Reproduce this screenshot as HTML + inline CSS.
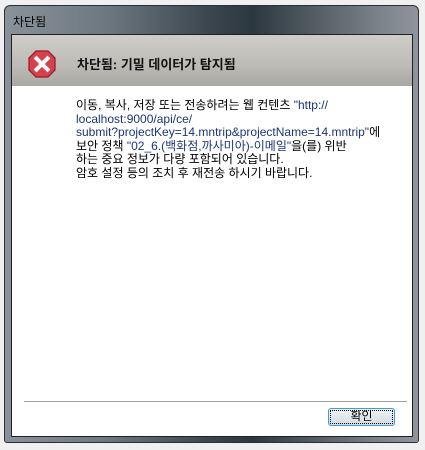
<!DOCTYPE html><html><head><meta charset="utf-8"><style>
body{margin:0;width:425px;height:450px;background:#f0f0f0;position:relative;overflow:hidden;font-family:"Liberation Sans","Noto Sans CJK KR","NanumGothic",sans-serif}
.win{position:absolute;left:4px;top:5px;width:415px;height:438px;border-radius:6px 6px 3px 3px;background:linear-gradient(90deg,#8a9299 0%,#6c7780 25%,#3a454e 50%,#2c3840 60%,#7a8188 90%,#8f959a 100%);border:1px solid #2a2f33;box-sizing:border-box}
.title{position:absolute;left:8px;top:7px;font-size:12px;color:#000}
.inner{position:absolute;left:6px;top:28px;width:402px;height:403px;background:#fff;border:1px solid #1e2226;box-sizing:border-box}
.hdr{position:absolute;left:0;top:0;width:400px;height:51px;background:linear-gradient(180deg,#cfcdc7 0%,#bdbbb5 60%,#a9a8a4 100%)}
.h{position:absolute;left:65px;top:19px;font-size:13px;font-weight:bold;color:#111}
.txt{position:absolute;left:64px;top:64px;font-size:12px;line-height:13.6px;color:#000;width:330px}
.b{color:#1c3575}
.sep{position:absolute;left:12px;top:366px;width:383px;height:1px;background:#a0a0a0}
.btn{position:absolute;left:316px;top:373px;width:67px;height:18px;border:1px solid #3c9fd6;border-radius:3px;background:linear-gradient(#eef2f5,#d4dce2);box-sizing:border-box;font-size:12px;text-align:center;line-height:15px;outline:1px dotted #000;outline-offset:-3px}
</style></head><body>
<div class="win"><div class="title">차단됨</div>
<div class="inner"><div class="hdr">
<svg style="position:absolute;left:16px;top:15px" width="28" height="28" viewBox="0 0 28 28"><polygon points="8,1 20,1 27,8 27,20 20,27 8,27 1,20 1,8" fill="#d8404c" stroke="#8a1c24" stroke-width="1.2"/><path d="M8.5 8.5L19.5 19.5M19.5 8.5L8.5 19.5" stroke="#fff" stroke-width="4" stroke-linecap="square"/></svg>
<div class="h">차단됨: 기밀 데이터가 탐지됨</div></div>
<div class="txt">이동, 복사, 저장 또는 전송하려는 웹 컨텐츠 <span class="b">"http://<br>localhost:9000/api/ce/<br>submit?projectKey=14.mntrip&amp;projectName=14.mntrip"</span>에<br>보안 정책 <span class="b">"02_6.(백화점,까사미아)-이메일"</span>을(를) 위반<br>하는 중요 정보가 다량 포함되어 있습니다.<br>암호 설정 등의 조치 후 재전송 하시기 바랍니다.</div>
<div class="sep"></div>
<div class="btn">확인</div>
</div></div>
</body></html>
